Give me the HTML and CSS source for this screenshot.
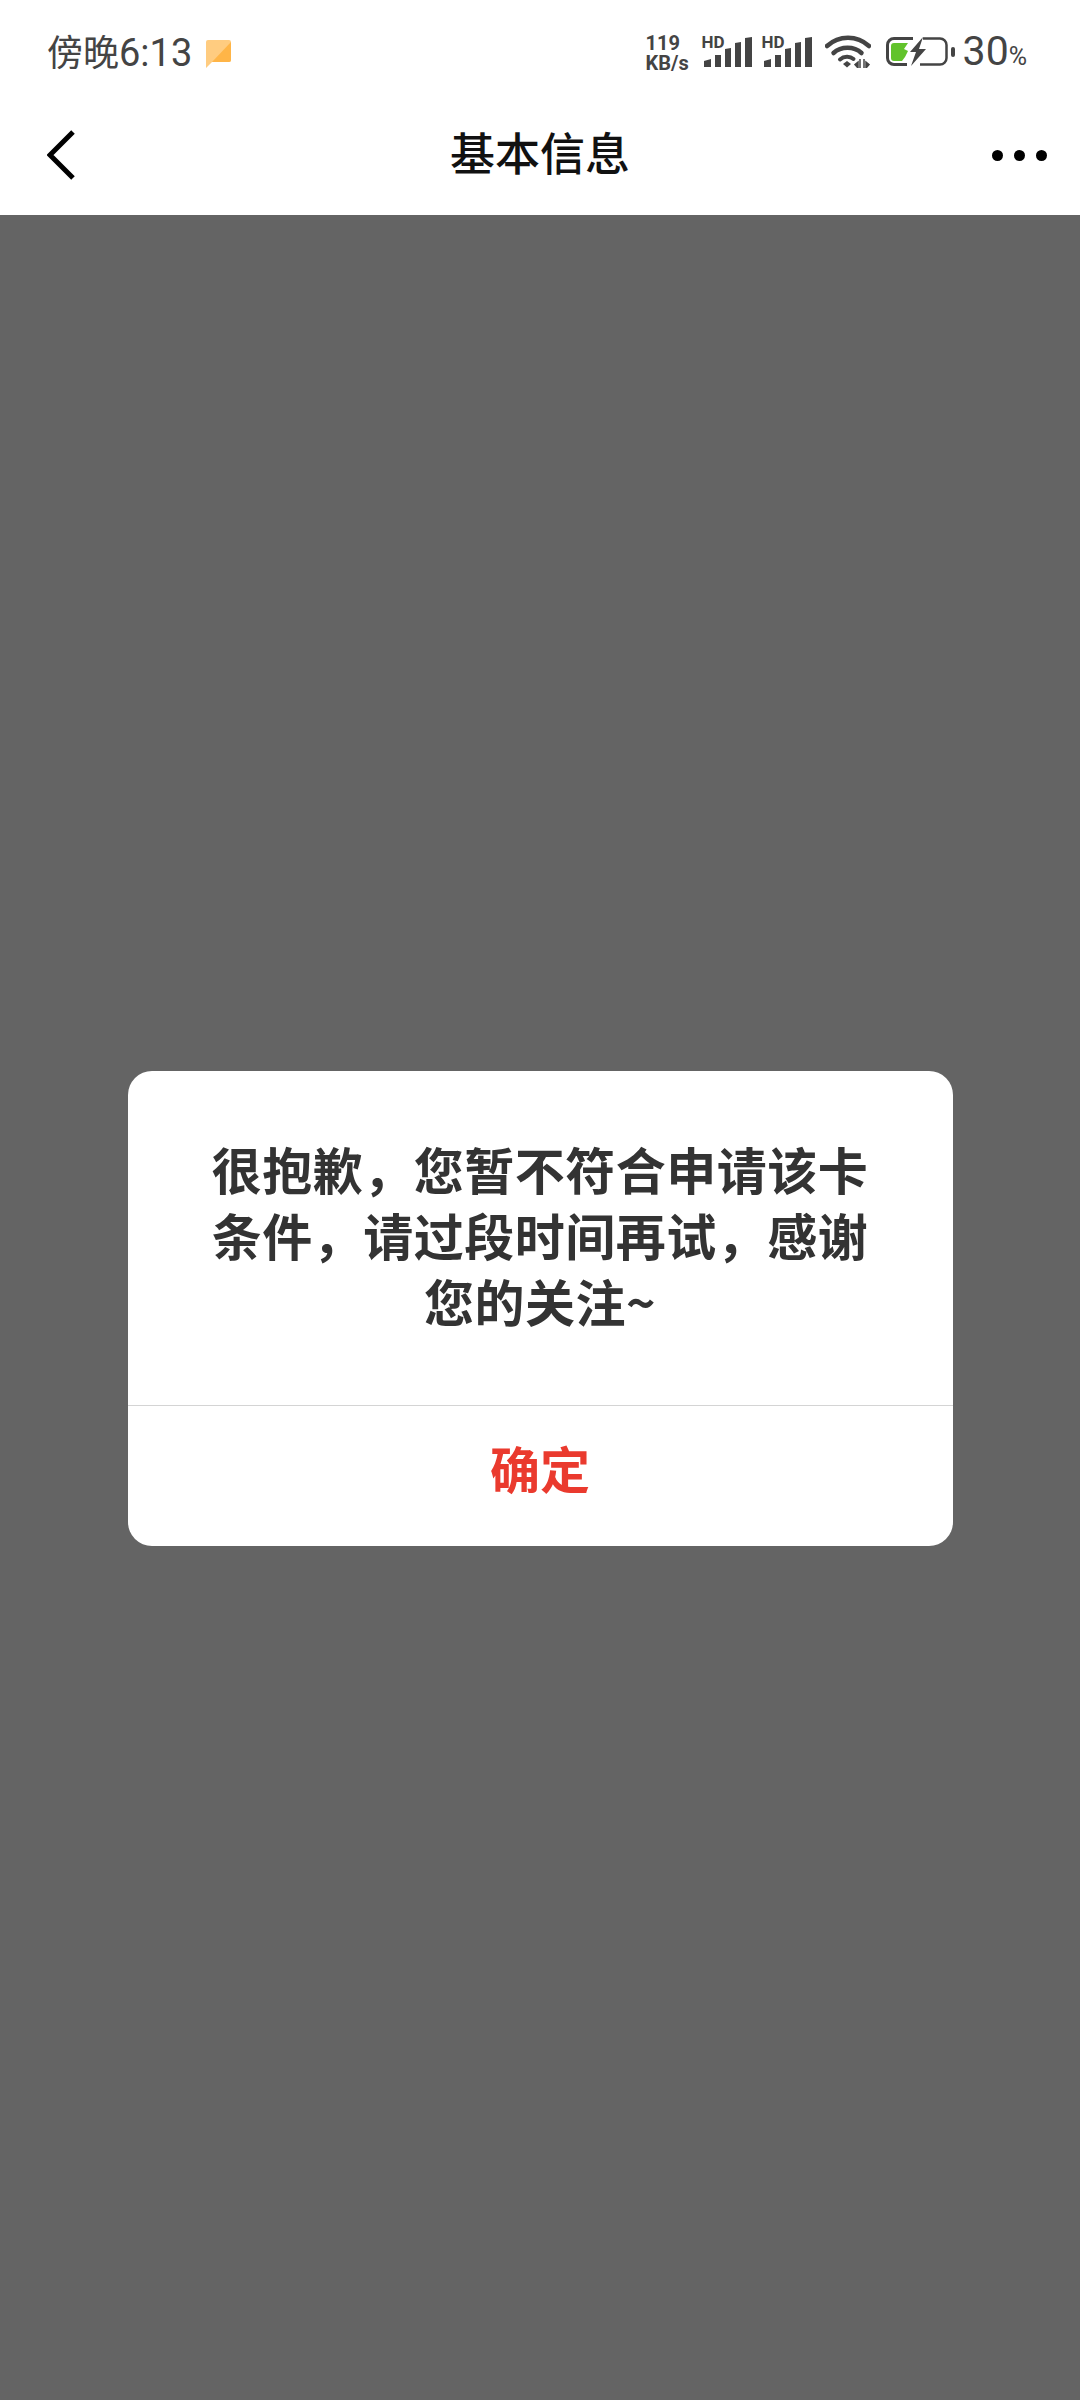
FILE: index.html
```html
<!DOCTYPE html>
<html lang="zh-CN">
<head>
    <meta charset="UTF-8">
    <meta name="viewport" content="width=device-width, initial-scale=1.0">
    <title>基本信息</title>
    <link rel="stylesheet" href="styles.css">
</head>
<body>
    <header class="top">
        <div class="status-bar">
            <div class="status-left">
                <span class="clock">傍晚<span class="clock-num">6:13</span></span>
                <svg class="note-icon" width="25" height="28" viewBox="0 0 25 28">
                    <path d="M2 0H23a2 2 0 0 1 2 2V20a2 2 0 0 1-2 2H6L0 28V2a2 2 0 0 1 2-2z" fill="#ffcc80"/>
                    <path d="M25 2V20a2 2 0 0 1-2 2H6z" fill="#ffb547"/>
                </svg>
            </div>
            <div class="status-right">
                <div class="speed"><span>119</span><span>KB/s</span></div>
                <div class="signal">
                    <span class="hd">HD</span>
                    <svg width="50" height="32" viewBox="0 0 50 32">
                        <path d="M2 26l7-2v8H2zM13 20h6v12h-6zM23 14l6-1v19h-6zM33 8l6-1v25h-6zM43 3l7-1v30h-7z" fill="#444"/>
                    </svg>
                </div>
                <div class="signal">
                    <span class="hd">HD</span>
                    <svg width="50" height="32" viewBox="0 0 50 32">
                        <path d="M2 26l7-2v8H2zM13 20h6v12h-6zM23 14l6-1v19h-6zM33 8l6-1v25h-6zM43 3l7-1v30h-7z" fill="#444"/>
                    </svg>
                </div>
                <svg class="wifi" width="46" height="33" viewBox="0 0 46 33">
                    <path d="M2 11C14 0 32 0 44 11" fill="none" stroke="#444" stroke-width="4.5" stroke-linecap="round"/>
                    <path d="M8.500 18C16 11 29 11 36.500 18" fill="none" stroke="#444" stroke-width="4.500" stroke-linecap="round"/>
                    <path d="M15 24.500C19 21 25 21 28.500 24" fill="none" stroke="#444" stroke-width="4" stroke-linecap="round"/>
                    <path d="M18 29l4-3 4 3-4 3.500z" fill="#444"/>
                    <path d="M33 33v-6l-3 2.500zM35 24v9M39 24v9M41 33v-6l3 2.500z" fill="#444" stroke="#444" stroke-width="1.500"/>
                </svg>
                <svg class="battery" width="69" height="29" viewBox="0 0 69 29">
                    <path d="M27 1.500H8a6.500 6.500 0 0 0-6.500 6.500V21A6.500 6.500 0 0 0 8 27.500H21" fill="none" stroke="#444" stroke-width="3"/>
                    <path d="M37 1.500H54a6.500 6.500 0 0 1 6.500 6.500V21a6.500 6.500 0 0 1-6.500 6.500H34" fill="none" stroke="#444" stroke-width="2.500"/>
                    <path d="M8 6H22L18 12 22 14 19 20 16 24H8a3 3 0 0 1-3-3V9a3 3 0 0 1 3-3z" fill="#62c32c"/>
                    <path d="M37 0 24 15H30L25 29 40 12H33z" fill="#444"/>
                    <rect x="65" y="10" width="4" height="10" rx="2" fill="#444"/>
                </svg>
                <span class="level">30<span class="percent">%</span></span>
            </div>
        </div>
        <div class="nav-bar">
            <svg class="back-icon" width="28" height="50" viewBox="0 0 28 50">
                <path d="M26 2 3 25 26 48" fill="none" stroke="#000" stroke-width="5"/>
            </svg>
            <h1 class="nav-title">基本信息</h1>
            <div class="more">
                <span class="dot"></span>
                <span class="dot"></span>
                <span class="dot"></span>
            </div>
        </div>
    </header>

    <main class="overlay">
        <div class="dialog">
            <p class="dialog-text">很抱歉，您暂不符合申请该卡条件，请过段时间再试，感谢您的关注~</p>
            <button type="button" class="dialog-button">确定</button>
        </div>
    </main>
</body>
</html>
```

FILE: styles.css
```css
:root {
    --overlay: #646464;
    --status-color: #444;
    --text-color: #333;
    --accent-red: #ea3a2e;
}

html, body {
    height: 100%;
}

body {
    margin: 0;
    display: flex;
    flex-direction: column;
    background-color: var(--overlay);
    font-family: "Noto Sans CJK SC", "Noto Sans", sans-serif;
}

.top {
    height: 215px;
    background-color: #fff;
    box-sizing: border-box;
    padding-top: 32px;
}

.status-bar {
    display: flex;
    justify-content: space-between;
    align-items: center;
    height: 38px;
    padding: 0 53px 0 47px;
    color: var(--status-color);
}

.status-left,
.status-right {
    display: flex;
    align-items: center;
}

.clock {
    font-size: 36px;
    line-height: 38px;
}

.clock-num {
    font-family: Roboto, sans-serif;
    font-size: 38px;
}

.note-icon {
    margin: 6px 0 0 14px;
}

.speed {
    display: flex;
    flex-direction: column;
    width: 48px;
    margin-top: 4px;
    font-family: Roboto, sans-serif;
    font-size: 20px;
    font-weight: 700;
    line-height: 20px;
}

.signal {
    position: relative;
    height: 32px;
    margin-left: 8px;
}

.signal + .signal {
    margin-left: 10px;
}

.hd {
    position: absolute;
    left: 0;
    top: 0;
    font-family: Roboto, sans-serif;
    font-size: 17px;
    font-weight: 700;
    line-height: 15px;
    color: #444;
}

.wifi {
    margin-left: 13px;
}

.battery {
    margin-left: 15px;
}

.level {
    margin: 6px 0 0 8px;
    font-family: Roboto, sans-serif;
    font-size: 41px;
    line-height: 38px;
}

.percent {
    font-size: 25px;
}

.nav-bar {
    position: relative;
    display: flex;
    justify-content: space-between;
    align-items: center;
    height: 50px;
    margin-top: 60px;
    padding: 0 33px 0 47px;
}

.nav-title {
    position: absolute;
    top: -3px;
    left: 0;
    right: 0;
    margin: 0;
    text-align: center;
    font-size: 45px;
    font-weight: 500;
    line-height: 50px;
    color: #111;
}

.more {
    display: flex;
    gap: 11px;
}

.dot {
    width: 11px;
    height: 11px;
    border-radius: 50%;
    background-color: #000;
}

.overlay {
    flex: 1;
    display: flex;
    justify-content: center;
    align-items: flex-start;
    padding-top: 856px;
}

.dialog {
    width: 825px;
    height: 475px;
    display: flex;
    flex-direction: column;
    box-sizing: border-box;
    background-color: #fff;
    border-radius: 24px;
    overflow: hidden;
}

.dialog-text {
    height: 335px;
    box-sizing: border-box;
    margin: 0;
    padding: 64px 80px 0;
    border-bottom: 1px solid #d4d4d4;
    text-align: center;
    font-size: 50px;
    font-weight: 700;
    letter-spacing: 0.5px;
    line-height: 66px;
    color: var(--text-color);
}

.dialog-button {
    flex: 1;
    padding: 0 0 19px;
    border: none;
    background: none;
    font-family: inherit;
    font-size: 50px;
    font-weight: 700;
    color: var(--accent-red);
    cursor: pointer;
}
```
